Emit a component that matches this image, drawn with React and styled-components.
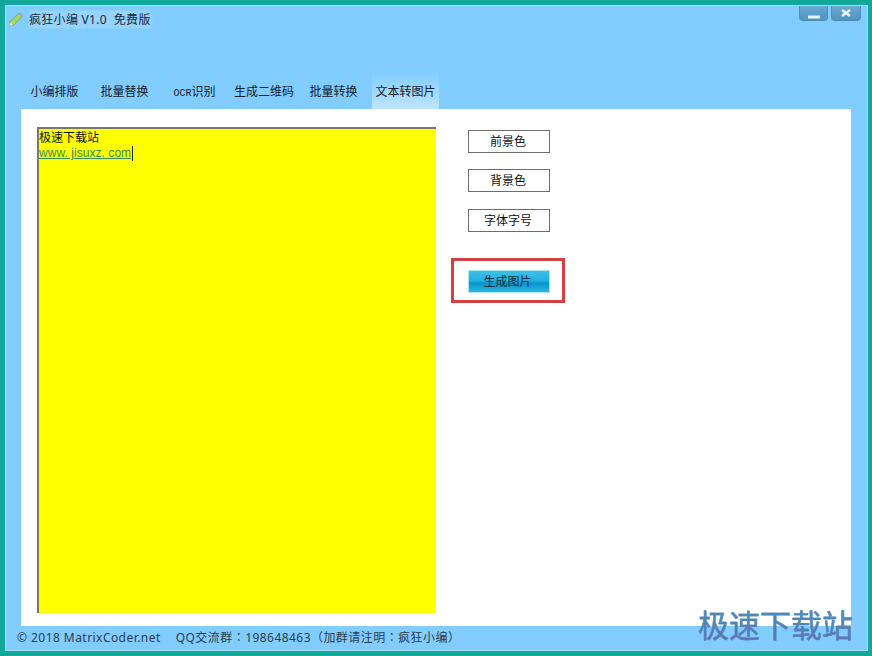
import React from 'react';
import styled, { createGlobalStyle } from 'styled-components';

const GlobalStyle = createGlobalStyle`
  html, body {
    margin: 0;
    padding: 0;
    background: #12a89a;
  }
  body {
    font-family: "Liberation Sans", "Noto Sans CJK SC", sans-serif;
  }
`;

const Win = styled.div`
  position: relative;
  box-sizing: border-box;
  width: 872px;
  height: 656px;
  background: #12a99b;
  padding: 5px 4px 5px 5px;
  overflow: hidden;
`;

const Inner = styled.div`
  box-sizing: border-box;
  height: 100%;
  background: #82cdff;
  border: 1px solid #a5dcf5;
  display: flex;
  flex-direction: column;
  padding: 0 16px 0 15px;
`;

const TitleBar = styled.div`
  display: flex;
  align-items: flex-start;
  justify-content: space-between;
  margin: 0 -10px 0 -12px;
  height: 67px;
`;

const TitleLeft = styled.div`
  display: flex;
  align-items: center;
  gap: 6px;
  padding-top: 4px;
  margin-left: -1px;
  font-family: "Noto Sans", "Noto Sans CJK SC", sans-serif;
  font-size: 12px;
  line-height: 20px;
  letter-spacing: 0.3px;
  color: #1a2a3a;
`;

const TitleText = styled.span`
  margin-top: 1px;
  line-height: 17px;
  background: rgba(190, 226, 250, 0.35);
  box-shadow: 0 0 3px rgba(190, 226, 250, 0.45);
  white-space: pre;
`;

const WinBtns = styled.div`
  display: flex;
  gap: 3px;
`;

const WinBtn = styled.div`
  width: ${(p) => p.$w}px;
  height: 15px;
  display: flex;
  align-items: center;
  justify-content: center;
  background: linear-gradient(#6aa9d2, #4f94c0);
  border: 1px solid #4a8fb5;
  border-top: 0;
  border-radius: 0 0 4px 4px;
  box-sizing: border-box;
`;

const Tabs = styled.div`
  display: flex;
  height: 36px;
`;

const Tab = styled.div`
  box-sizing: border-box;
  width: ${(p) => p.$w}px;
  margin-left: ${(p) => (p.$active ? 5 : 0)}px;
  display: flex;
  align-items: center;
  justify-content: center;
  padding-bottom: 1px;
  font-size: 12px;
  color: #14202c;
  white-space: nowrap;
  background: ${(p) => (p.$active ? 'linear-gradient(#82cdff, #bfe5fd)' : 'transparent')};
`;

const OcrLatin = styled.span`
  font-family: "Liberation Mono", monospace;
  font-size: 10px;
`;

const Panel = styled.div`
  flex: 1;
  background: #fff;
  display: flex;
  align-items: flex-start;
  padding: 18px 0 0 16px;
  min-height: 0;
`;

const Editor = styled.div`
  box-sizing: border-box;
  width: 399px;
  height: 486px;
  background: #ffff00;
  border-top: 2px solid #77776a;
  border-left: 2px solid #77776a;
  padding: 2px 0 0 0;
  font-size: 12px;
  line-height: 15px;
  color: #111;
`;

const LinkLine = styled.div`
  display: flex;
  align-items: stretch;
`;

const Link = styled.span`
  color: #338d55;
  text-decoration: underline;
  white-space: pre;
  letter-spacing: 0.05px;
`;

const Caret = styled.span`
  width: 1px;
  background: #222;
  margin-left: 1px;
`;

const Actions = styled.div`
  margin-left: 32px;
  padding-top: 3px;
  display: flex;
  flex-direction: column;
  align-items: flex-start;
`;

const ActionBtn = styled.div`
  box-sizing: border-box;
  width: 82px;
  height: 23px;
  margin-bottom: ${(p) => p.$gap}px;
  border: 1px solid #6d6d6d;
  background: #fff;
  display: flex;
  align-items: center;
  justify-content: center;
  padding: 0 2px 2px 0;
  font-size: 12px;
  color: #111;
`;

const Highlight = styled.div`
  margin: 26px 0 0 -17px;
  box-sizing: border-box;
  width: 114px;
  height: 45px;
  border: 3px solid #d2403f;
  display: flex;
  align-items: center;
  justify-content: center;
  padding: 2px 0 0 1px;
`;

const PrimaryBtn = styled.div`
  box-sizing: border-box;
  width: 82px;
  height: 23px;
  border: 1px solid #a9e6f2;
  background: linear-gradient(#3fc0e6 0%, #22b2e2 45%, #0895cc 60%, #2eb9e2 100%);
  display: flex;
  align-items: center;
  justify-content: center;
  padding: 0 2px 2px 0;
  font-size: 12px;
  color: #0b2a3c;
`;

const Footer = styled.div`
  height: 24px;
  box-sizing: border-box;
  padding-bottom: 2px;
  margin-left: -4px;
  display: flex;
  align-items: center;
  gap: 15px;
  font-family: "Noto Sans", "Noto Sans CJK TC", sans-serif;
  font-size: 12px;
  letter-spacing: 0.45px;
  color: #2a3b4c;
  white-space: nowrap;
`;

const Watermark = styled.div`
  position: absolute;
  left: 698px;
  top: 607px;
  font-size: 31px;
  line-height: 40px;
  font-weight: 400;
  white-space: nowrap;
  background: linear-gradient(#4a8cb8 20%, #5f72b4 85%);
  -webkit-background-clip: text;
  background-clip: text;
  color: transparent;
  -webkit-text-stroke: 0.4px #5583b6;
`;

const Pencil = () => (
  <svg width="15" height="15" viewBox="0 0 15 15">
    <path d="M1.5 14l.8-4.6L10.6 1.6l3.2 3.2-7.9 8.1z" fill="#a4da6c" stroke="#6f9c4a" strokeWidth="0.7" />
    <path d="M10.4 1.8l1.3-1.3 3.2 3.2-1.3 1.3z" fill="#d9a0a0" stroke="#a07a7a" strokeWidth="0.4" />
    <path d="M1.5 14l.8-3.6 2.9 2.7z" fill="#f3e3b5" />
  </svg>
);

export default function App() {
  return (
    <Win>
      <GlobalStyle />
      <Inner>
        <TitleBar>
          <TitleLeft>
            <Pencil />
            <TitleText>疯狂小编 V1.0  免费版</TitleText>
          </TitleLeft>
          <WinBtns>
            <WinBtn $w={29}>
              <svg width="12" height="13" viewBox="0 0 12 13">
                <rect x="0" y="8.5" width="12" height="3" fill="#e8f4fb" />
              </svg>
            </WinBtn>
            <WinBtn $w={30}>
              <svg width="10" height="8" viewBox="0 0 10 8">
                <path d="M1 1l8 6M9 1l-8 6" stroke="#eef7fc" strokeWidth="2.4" />
              </svg>
            </WinBtn>
          </WinBtns>
        </TitleBar>
        <Tabs>
          <Tab $w={67}>小编排版</Tab>
          <Tab $w={73}>批量替换</Tab>
          <Tab $w={67}>
            <span>
              <OcrLatin>OCR</OcrLatin>识别
            </span>
          </Tab>
          <Tab $w={72}>生成二维码</Tab>
          <Tab $w={67}>批量转换</Tab>
          <Tab $w={67} $active>文本转图片</Tab>
        </Tabs>
        <Panel>
          <Editor>
            <div>极速下载站</div>
            <LinkLine>
              <Link>www. jisuxz. com</Link>
              <Caret />
            </LinkLine>
          </Editor>
          <Actions>
            <ActionBtn $gap={16}>前景色</ActionBtn>
            <ActionBtn $gap={17}>背景色</ActionBtn>
            <ActionBtn $gap={0}>字体字号</ActionBtn>
            <Highlight>
              <PrimaryBtn>生成图片</PrimaryBtn>
            </Highlight>
          </Actions>
        </Panel>
        <Footer>
          <span>© 2018 MatrixCoder.net</span>
          <span>QQ交流群：198648463（加群请注明：疯狂小编）</span>
        </Footer>
      </Inner>
      <Watermark>极速下载站</Watermark>
    </Win>
  );
}
